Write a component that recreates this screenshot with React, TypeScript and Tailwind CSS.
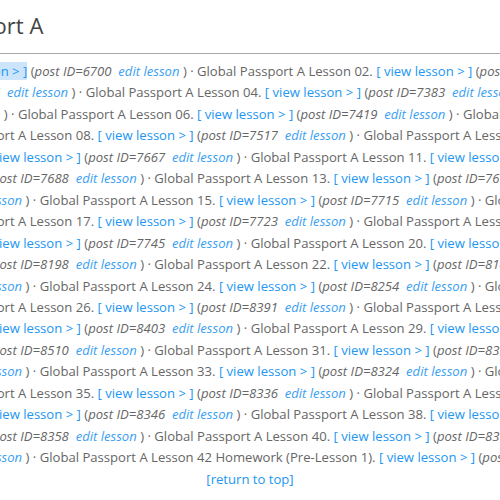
import React from 'react';

type Kind = 'g' | 'v' | 'p' | 'e';
type Word = { text: string; kind: Kind; sep: string; hl?: boolean };

const ids = [
  6700, 7370, 7376, 7383, 7401, 7419, 7505, 7517, 7530, 7667,
  7672, 7688, 7697, 7705, 7715, 7719, 7723, 7735, 7745, 7752,
  8198, 8148, 8203, 8254, 8260, 8391, 8397, 8403, 8409, 8510,
  8315, 8320, 8324, 8330, 8336, 8341, 8346, 8352, 8358, 8373,
  8362, 8380,
];

// every lesson entry is 17 words, except the last (homework) one
const lessonWords = (i: number): Word[] => {
  const n = String(i + 1).padStart(2, '0');
  const last = i === ids.length - 1;
  const title: Word[] = last
    ? ['Lesson', '42', 'Homework', '(Pre-Lesson', '1).'].map((t) => ({ text: t, kind: 'g', sep: ' ' }))
    : [
        { text: 'Lesson', kind: 'g', sep: ' ' },
        { text: `${n}.`, kind: 'g', sep: ' ' },
      ];
  const hl = i === 0;
  return [
    { text: 'Global', kind: 'g', sep: ' ' },
    { text: 'Passport', kind: 'g', sep: ' ' },
    { text: 'A', kind: 'g', sep: ' ' },
    ...title,
    { text: '[', kind: 'v', sep: ' ', hl },
    { text: 'view', kind: 'v', sep: ' ', hl },
    { text: 'lesson', kind: 'v', sep: ' ', hl },
    { text: '>', kind: 'v', sep: ' ', hl },
    { text: ']', kind: 'v', sep: ' ', hl },
    { text: '(', kind: 'g', sep: '' },
    { text: 'post', kind: 'p', sep: ' ' },
    { text: `ID=${ids[i]}`, kind: 'p', sep: '\u00a0 ' },
    { text: 'edit', kind: 'e', sep: ' ' },
    { text: 'lesson', kind: 'e', sep: ' ' },
    { text: ')', kind: 'g', sep: last ? '' : ' ' },
    ...(last ? [] : [{ text: '·', kind: 'g' as Kind, sep: ' ' }]),
  ];
};

const words: Word[] = ids.flatMap((_, i) => lessonWords(i));

// where each visual line starts: [lesson index, word index in that lesson]
const breaks: [number, number][] = [
  [0, 0], [2, 3], [4, 5], [6, 10], [8, 14], [11, 1], [13, 4], [15, 10], [17, 14], [20, 1],
  [22, 4], [24, 10], [26, 14], [29, 1], [31, 4], [33, 10], [35, 14], [38, 1], [40, 4],
];
const starts = breaks.map(([l, w]) => l * 17 + w);

const kindClass: Record<Kind, string> = {
  g: '',
  v: 'font-medium text-[#2196f3]',
  p: 'italic',
  e: 'italic text-[#3aa0f2]',
};

const Line = ({ from, to }: { from: number; to: number }) => {
  const slice = words.slice(from, to);
  return (
    <div className="whitespace-nowrap">
      {slice.map((w, i) => {
        const next = slice[i + 1];
        const sep = next ? w.sep : '';
        const inside = next && next.kind === w.kind && next.hl === w.hl;
        return (
          <React.Fragment key={i}>
            <span className={`${kindClass[w.kind]} ${w.hl ? 'bg-[#cde5fb]' : ''}`}>
              {w.text}
              {inside ? sep : ''}
            </span>
            {inside ? '' : sep}
          </React.Fragment>
        );
      })}
    </div>
  );
};

export default function App() {
  return (
    <div className="w-full overflow-hidden flex justify-center bg-white font-['Open_Sans',sans-serif]">
      <div className="w-[996px] shrink-0">
        <h1 className="pt-[10px] pl-[110px] text-[22px] leading-[30px] font-normal text-[#444]">
          Global Passport A
        </h1>
        <hr className="mt-[13px] border-t border-[#a8a8a8]" />
        <div className="mt-[7px] text-[13.1px] leading-[21.45px] text-[#666]">
          {starts.map((s, i) => (
            <Line key={i} from={s} to={starts[i + 1] ?? words.length} />
          ))}
          <div className="text-center">
            <a href="#top" className="font-medium text-[#2196f3]">
              [return to top]
            </a>
          </div>
        </div>
      </div>
    </div>
  );
}
